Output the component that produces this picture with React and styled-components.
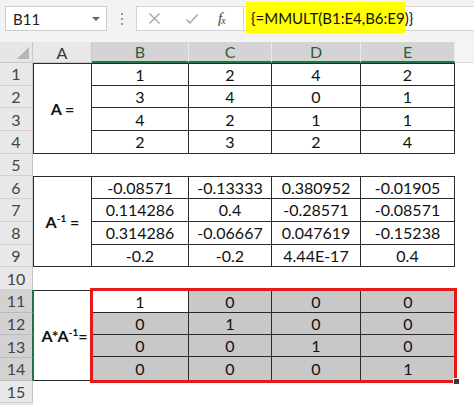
import React from "react";
import styled, { createGlobalStyle } from "styled-components";

const GlobalStyle = createGlobalStyle`
  html, body {
    margin: 0;
    padding: 0;
    background: #ffffff;
  }
  body {
    font-family: Lato, "Open Sans", "Liberation Sans", sans-serif;
  }
`;

const ROW_H = 22.7;
const COLS = [
  { name: "A", width: 59 },
  { name: "B", width: 97 },
  { name: "C", width: 83 },
  { name: "D", width: 89 },
  { name: "E", width: 94 },
];

const Page = styled.div`
  width: 474px;
  height: 405px;
  overflow: hidden;
  display: flex;
  flex-direction: column;
  background: #fff;
`;

const FormulaBar = styled.div`
  height: 42px;
  flex-shrink: 0;
  background: #f3f3f3;
  display: flex;
  align-items: flex-start;
  padding-top: 6px;
  box-sizing: border-box;
`;

const NameBox = styled.div`
  width: 102px;
  height: 25px;
  margin-left: 5px;
  box-sizing: border-box;
  background: #fff;
  border: 1px solid #cdcdcd;
  display: flex;
  align-items: center;
  justify-content: space-between;
  padding: 0 6px 0 7px;
  font-size: 15px;
  color: #222;
`;

const Caret = styled.span`
  width: 0;
  height: 0;
  border-left: 4px solid transparent;
  border-right: 4px solid transparent;
  border-top: 4px solid #666;
`;

const Grip = styled.div`
  width: 29px;
  height: 25px;
  display: flex;
  flex-direction: column;
  align-items: center;
  justify-content: center;
  gap: 3px;
  span {
    width: 2px;
    height: 2px;
    background: #9a9a9a;
  }
`;

const ButtonBox = styled.div`
  width: 107px;
  height: 25px;
  box-sizing: border-box;
  background: #fff;
  border: 1px solid #d4d4d4;
  border-right: none;
  display: flex;
  align-items: center;
  padding-left: 11px;
`;

const IconSlot = styled.div`
  width: ${({ w }) => w}px;
  display: flex;
  align-items: center;
  color: #9e9e9e;
`;

const Fx = styled.span`
  font-family: "Liberation Serif", "DejaVu Serif", serif;
  font-style: italic;
  font-size: 15px;
  color: #444;
  letter-spacing: -1px;
  sub {
    font-size: 10px;
    vertical-align: -1px;
  }
`;

const FormulaInput = styled.div`
  flex: 1;
  height: 25px;
  background: #fff;
  border: 1px solid #d4d4d4;
  border-right: none;
  box-sizing: border-box;
  position: relative;
`;

const Highlight = styled.div`
  position: absolute;
  left: 2px;
  top: -5px;
  width: 159px;
  height: 31px;
  background: #ffff00;
  display: flex;
  align-items: center;
  padding-left: 5px;
  box-sizing: border-box;
  font-size: 15px;
  color: #111;
`;

const HeaderRow = styled.div`
  height: 21px;
  flex-shrink: 0;
  display: flex;
  background: #f3f3f3;
`;

const Corner = styled.div`
  width: 33px;
  box-sizing: border-box;
  background: #e6e6e6;
  border-right: 1px solid #c9c9c9;
  border-bottom: 1px solid #c9c9c9;
  position: relative;
  &::after {
    content: "";
    position: absolute;
    right: 3px;
    bottom: 3px;
    border-left: 12px solid transparent;
    border-bottom: 12px solid #b5b5b5;
  }
`;

const ColHead = styled.div`
  width: ${({ w }) => w}px;
  box-sizing: border-box;
  display: flex;
  align-items: center;
  justify-content: center;
  font-size: 16px;
  background: ${({ selected }) => (selected ? "#d4d4d4" : "#e8e8e8")};
  color: ${({ selected }) => (selected ? "#2f5a43" : "#333")};
  border-right: 1px solid ${({ selected }) => (selected ? "#e8e8e8" : "#c9c9c9")};
  border-bottom: ${({ selected }) =>
    selected ? "2px solid #217346" : "1px solid #c9c9c9"};
`;

const HeadFiller = styled.div`
  flex: 1;
  background: #f5f5f5;
  border-bottom: 1px solid #dcdcdc;
`;

const Body = styled.div`
  height: 342px;
  flex-shrink: 0;
  display: flex;
`;

const RowHeads = styled.div`
  width: 33px;
  flex-shrink: 0;
  display: flex;
  flex-direction: column;
  background: #e8e8e8;
`;

const RowHead = styled.div`
  height: ${ROW_H}px;
  flex-shrink: 0;
  box-sizing: border-box;
  display: flex;
  align-items: center;
  justify-content: center;
  font-size: 16px;
  color: #444;
  background: ${({ selected }) => (selected ? "#d2d2d2" : "#e8e8e8")};
  border-bottom: 1px solid ${({ selected }) => (selected ? "#bcbcbc" : "#d2d2d2")};
  border-right: 1px solid ${({ selected }) => (selected ? "#217346" : "#c6c6c6")};
`;

const Content = styled.div`
  flex: 1;
  display: flex;
  flex-direction: column;
`;

const Spacer = styled.div`
  height: ${ROW_H}px;
  flex-shrink: 0;
`;

const Table = styled.div`
  display: grid;
  grid-template-columns: ${COLS.map((c) => c.width + "px").join(" ")};
  grid-template-rows: repeat(4, ${ROW_H}px);
  width: 422px;
  flex-shrink: 0;
`;

const Cell = styled.div`
  box-sizing: border-box;
  display: flex;
  align-items: center;
  justify-content: center;
  font-size: 16px;
  color: #111;
  border-right: 1px solid #2b2b2b;
  border-bottom: 1px solid #2b2b2b;
  border-top: ${({ top }) => (top ? "1px solid #2b2b2b" : "none")};
`;

const Label = styled.div`
  grid-row: 1 / span 4;
  box-sizing: border-box;
  display: flex;
  align-items: center;
  justify-content: center;
  font-size: 16px;
  font-weight: 700;
  color: #111;
  border: 1px solid #2b2b2b;
  border-left-color: ${({ green }) => (green ? "#217346" : "#2b2b2b")};
  sup {
    font-size: 10px;
    vertical-align: 6px;
  }
`;

const ResultBlock = styled.div`
  display: flex;
  height: ${ROW_H * 4}px;
  flex-shrink: 0;
`;

const ResultLabel = styled(Label)`
  width: 59px;
  padding-left: 4px;
  padding-top: 1px;
`;

const Selection = styled.div`
  position: relative;
  width: 363px;
  display: grid;
  grid-template-columns: 97px 83px 89px 94px;
  grid-template-rows: repeat(4, 1fr);
  box-sizing: border-box;
  outline: 3px solid #e31b1b;
  outline-offset: -1px;
  border-top: 1px solid #2b2b2b;
  border-bottom: 1px solid #2b2b2b;
`;

const ResultCell = styled.div`
  box-sizing: border-box;
  display: flex;
  align-items: center;
  justify-content: center;
  font-size: 16px;
  color: #111;
  background: ${({ active }) => (active ? "#ffffff" : "#c8c8c8")};
  border-right: ${({ lastCol }) => (lastCol ? "none" : "1px solid #2b2b2b")};
  border-bottom: ${({ lastRow }) => (lastRow ? "none" : "1px solid #2b2b2b")};
`;

const FillHandle = styled.span`
  position: absolute;
  right: -5px;
  bottom: -5px;
  width: 5px;
  height: 5px;
  background: #3a3a3a;
  border: 1px solid #fff;
`;

const matrixA = [
  ["1", "2", "4", "2"],
  ["3", "4", "0", "1"],
  ["4", "2", "1", "1"],
  ["2", "3", "2", "4"],
];

const matrixInv = [
  ["-0.08571", "-0.13333", "0.380952", "-0.01905"],
  ["0.114286", "0.4", "-0.28571", "-0.08571"],
  ["0.314286", "-0.06667", "0.047619", "-0.15238"],
  ["-0.2", "-0.2", "4.44E-17", "0.4"],
];

const identity = [
  ["1", "0", "0", "0"],
  ["0", "1", "0", "0"],
  ["0", "0", "1", "0"],
  ["0", "0", "0", "1"],
];

const MatrixTable = ({ label, data }) => (
  <Table>
    <Label>{label}</Label>
    {data.map((row, r) =>
      row.map((v, c) => (
        <Cell key={`${r}-${c}`} top={r === 0}>
          {v}
        </Cell>
      ))
    )}
  </Table>
);

const XIcon = () => (
  <svg width="13" height="13" viewBox="0 0 13 13">
    <path d="M1.5 1.5 L11.5 11.5 M11.5 1.5 L1.5 11.5" stroke="#a3a3a3" strokeWidth="1.3" fill="none" />
  </svg>
);

const CheckIcon = () => (
  <svg width="14" height="12" viewBox="0 0 14 12">
    <path d="M1.5 6.5 L5 10 L12.5 1.5" stroke="#a3a3a3" strokeWidth="1.4" fill="none" />
  </svg>
);

export default function App() {
  const rows = Array.from({ length: 15 }, (_, i) => i + 1);
  return (
    <Page>
      <GlobalStyle />
      <FormulaBar>
        <NameBox>
          <span>B11</span>
          <Caret />
        </NameBox>
        <Grip>
          <span />
          <span />
          <span />
        </Grip>
        <ButtonBox>
          <IconSlot w={37}>
            <XIcon />
          </IconSlot>
          <IconSlot w={33}>
            <CheckIcon />
          </IconSlot>
          <IconSlot w={16}>
            <Fx>
              f<sub>x</sub>
            </Fx>
          </IconSlot>
        </ButtonBox>
        <FormulaInput>
          <Highlight>{"{=MMULT(B1:E4,B6:E9)}"}</Highlight>
        </FormulaInput>
      </FormulaBar>

      <HeaderRow>
        <Corner />
        {COLS.map((c) => (
          <ColHead key={c.name} w={c.width} selected={c.name !== "A"}>
            {c.name}
          </ColHead>
        ))}
        <HeadFiller />
      </HeaderRow>

      <Body>
        <RowHeads>
          {rows.map((n) => (
            <RowHead key={n} selected={n >= 11 && n <= 14}>
              {n}
            </RowHead>
          ))}
        </RowHeads>
        <Content>
          <MatrixTable label="A =" data={matrixA} />
          <Spacer />
          <MatrixTable
            label={
              <span>
                A<sup>-1</sup> =
              </span>
            }
            data={matrixInv}
          />
          <Spacer />
          <ResultBlock>
            <ResultLabel green>
              <span>
                A*A<sup>-1</sup>=
              </span>
            </ResultLabel>
            <Selection>
              {identity.map((row, r) =>
                row.map((v, c) => (
                  <ResultCell
                    key={`${r}-${c}`}
                    active={r === 0 && c === 0}
                    lastCol={c === 3}
                    lastRow={r === 3}
                  >
                    {v}
                  </ResultCell>
                ))
              )}
              <FillHandle />
            </Selection>
          </ResultBlock>
          <Spacer />
        </Content>
      </Body>
    </Page>
  );
}
